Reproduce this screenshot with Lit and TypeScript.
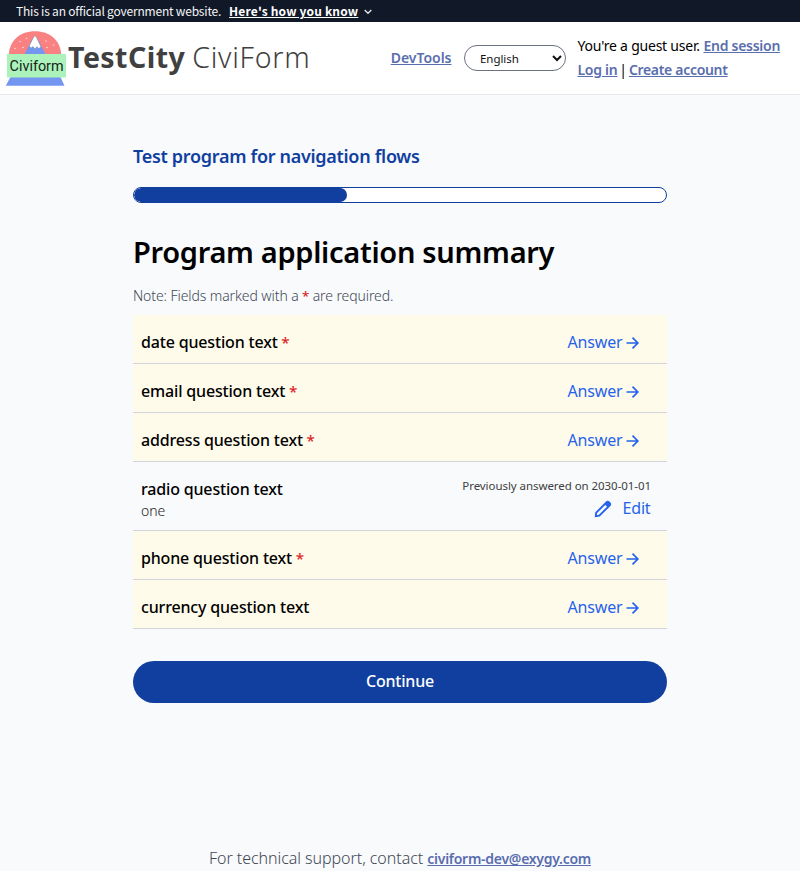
import { LitElement, html, css, svg, nothing } from "lit";
import { customElement } from "lit/decorators.js";

interface Question {
  text: string;
  required?: boolean;
  answer?: string;
  answeredOn?: string;
}

const QUESTIONS: Question[] = [
  { text: "date question text", required: true },
  { text: "email question text", required: true },
  { text: "address question text", required: true },
  { text: "radio question text", answer: "one", answeredOn: "2030-01-01" },
  { text: "phone question text", required: true },
  { text: "currency question text" },
];

const dots = [
  [15, 18.5], [20, 11.5], [26.500, 8.5], [23, 17.5], [46, 11], [47, 17.5], [53.500, 15],
];

const logo = html`<svg class="logo" width="64" height="60" viewBox="0 0 64 60">
  <path d="M8.8 24C10 10 20 1.200 35 1.200C50 1.200 60 10 61.200 24Z" fill="#fa8182" />
  ${dots.map(([x, y]) => svg`<circle cx=${x} cy=${y} r="0.8" fill="#fbd5d6" />`)}
  <path d="M24.700 24L32 9.500Q35 3 38 9.500L45.500 24Z" fill="#7396f0" />
  <path d="M29.200 16L33.700 7Q35 4.800 36.300 7L41 17L38.500 18.500L37 16.500L35 19L33 16.500L31 18Z" fill="#fff" stroke="#777" stroke-width="0.4" />
  <path d="M11 46H60L64.500 55.800H5.800Z" fill="#7396f0" />
  <rect x="7" y="24" width="59" height="23.500" fill="#abf3bb" />
  <text class="logo-text" x="9.600" y="41" textLength="54" lengthAdjust="spacingAndGlyphs">Civiform</text>
</svg>`;

const arrow = html`<svg class="arrow" width="13" height="14" viewBox="0 0 13 14">
  <path d="M0.500 7H11.500M6.500 1.700L11.800 7L6.500 12.300" fill="none" stroke="currentColor" stroke-width="1.700" />
</svg>`;

const pencil = html`<svg class="pencil" width="18" height="18" viewBox="0 0 18 18">
  <path d="M1.800 16.200L2.200 12.700L12.700 2.200Q13.700 1.300 14.700 2.200L15.700 3.200Q16.700 4.200 15.700 5.300L5.300 15.700Z" fill="none" stroke="currentColor" stroke-width="1.900" />
  <path d="M10.600 4.200L13 1.700Q14 1 15 1.800L16.300 3.100Q17 4 16.300 5L13.800 7.400Z" fill="currentColor" />
</svg>`;

@customElement("app-root")
export class AppRoot extends LitElement {
  static styles = css`
    :host {
      display: flex;
      flex-direction: column;
      height: 871px;
      overflow: hidden;
      background: #f8fafc;
      color: #000;
      font-family: "Noto Sans", sans-serif;
      font-size: 16px;
      white-space: nowrap;
    }
    * { box-sizing: border-box; }
    .banner {
      display: flex;
      align-items: center;
      height: 22px;
      flex: none;
      padding-left: 16px;
      background: #111827;
      color: #f3f4f6;
      font: 12px/22px "Noto Sans CJK JP", sans-serif;
    }
    .official { letter-spacing: -0.2px; }
    .know { margin-left: 8px; color: #fff; font-weight: 700; letter-spacing: 0.17px; text-decoration: underline; }
    .chev { margin: 2px 0 0 6px; }
    header {
      display: flex;
      align-items: center;
      height: 73px;
      flex: none;
      padding: 0 20px 0 0;
      background: #fff;
      border-bottom: 1px solid #e5e7eb;
    }
    .logo { display: block; flex: none; margin: 3px 4px 0 0; overflow: visible; }
    .logo-text { font: 15px Roboto, sans-serif; fill: #14251a; }
    .brand { margin-top: -2px; font-size: 28.500px; line-height: 36px; color: #404040; font-weight: 300; }
    .brand b { font-weight: 700; letter-spacing: 0.450px; }
    .civi { margin-left: -0.500px; letter-spacing: 0.75px; }
    a { color: #5a6dae; font-weight: 600; font-size: 14px; letter-spacing: -0.27px; text-decoration: underline; }
    .tools { display: flex; align-items: center; margin-left: auto; }
    .dev { margin-top: -2px; letter-spacing: -0.02px; }
    select {
      width: 102px;
      height: 26px;
      margin: 0 11.5px 0 12.5px;
      padding: 0 0 0 11px;
      border: 1px solid #6b7280;
      border-radius: 13px;
      background: #fff;
      color: #111;
      font: 11.500px "Noto Sans", sans-serif;
      letter-spacing: -0.05px;
    }
    .user { width: 202.5px; font-size: 14px; line-height: 24px; }
    .guest { letter-spacing: -0.22px; }
    .bar { margin: 0 -1.8px; }
    .create { letter-spacing: -0.31px; }
    main { width: 534px; margin: 47px auto 0; flex: none; }
    .program { margin: 0; color: #113f9f; font-size: 18px; line-height: 28px; font-weight: 600; letter-spacing: -0.3px; }
    .track { height: 16px; margin-top: 17px; border: 1px solid #113f9f; border-radius: 8px; background: #fff; overflow: hidden; }
    .fill { height: 14px; border-radius: 8px; background: #113f9f; }
    h1 { margin: 29px 0 0; font-size: 29px; line-height: 40px; font-weight: 600; letter-spacing: -0.3px; }
    .note { height: 20px; margin-top: 14px; font-size: 14px; line-height: 20px; color: #3f4855; font-weight: 350; letter-spacing: -0.09px; }
    .star { margin-left: -0.3px; color: #dc2626; font-size: 0.95em; line-height: 0; font-weight: 500; }
    .list { margin-top: 9px; }
    .row { display: flex; justify-content: space-between; height: 49px; padding: 16px 16px 0 8px; border-bottom: 1px solid #d1d5db; background: #fffbeb; line-height: 22px; }
    .row.done { height: 69px; background: none; }
    .q { font-weight: 500; letter-spacing: -0.17px; }
    .ans { margin-top: 1px; font-size: 14px; color: #222; line-height: 20px; font-weight: 350; }
    .action { display: flex; align-items: center; height: 22px; margin-right: 12px; color: #2563eb; letter-spacing: -0.15px; }
    .arrow { margin: 2px 0 0 3.5px; }
    .side { display: flex; flex-direction: column; align-items: flex-end; margin-top: -2px; }
    .side .action { margin: 1px 0.5px 0 0; }
    .prev { font-size: 11.500px; line-height: 20px; color: #404040; letter-spacing: -0.06px; }
    .pencil { margin: 1px 10px 0 0; }
    button { display: block; width: 534px; height: 42px; margin: 32px 0 0; padding: 0 0 2px; border: 0; border-radius: 21px; background: #113f9f; color: #fff; font: 500 16px "Noto Sans", sans-serif; letter-spacing: -0.2px; }
    footer { margin-top: 143px; text-align: center; line-height: 24px; color: #3f4855; font-weight: 350; }
    .support { letter-spacing: -0.05px; }
  `;

  private renderQuestion(q: Question) {
    const done = q.answer !== undefined;
    return html`<div class="row ${done ? "done" : ""}">
      <div>
        <div class="q">${q.text}${q.required ? html` <span class="star">*</span>` : nothing}</div>
        ${done ? html`<div class="ans">${q.answer}</div>` : nothing}
      </div>
      ${done
        ? html`<div class="side"><div class="prev">Previously answered on ${q.answeredOn}</div><div class="action">${pencil}<span>Edit</span></div></div>`
        : html`<div class="action"><span>Answer</span>${arrow}</div>`}
    </div>`;
  }

  render() {
    return html`
      <div class="banner">
        <span class="official">This is an official government website.</span>
        <span class="know">Here's how you know</span>
        <svg class="chev" width="8" height="6" viewBox="0 0 8 6"><path d="M0.700 1L4 4.300L7.300 1" fill="none" stroke="#e5e7eb" stroke-width="1.300" /></svg>
      </div>
      <header>
        ${logo}
        <div class="brand"><b>TestCity</b> <span class="civi">CiviForm</span></div>
        <div class="tools">
          <a class="dev">DevTools</a>
          <select><option>English</option></select>
          <div class="user">
            <div><span class="guest">You're a guest user.</span> <a>End session</a></div>
            <div><a>Log in</a> <span class="bar">|</span> <a class="create">Create account</a></div>
          </div>
        </div>
      </header>
      <main>
        <h2 class="program">Test program for navigation flows</h2>
        <div class="track"><div class="fill" style="width: 40%"></div></div>
        <h1>Program application summary</h1>
        <div class="note">Note: Fields marked with a <span class="star">*</span> are required.</div>
        <div class="list">${QUESTIONS.map((q) => this.renderQuestion(q))}</div>
        <button>Continue</button>
      </main>
      <footer><span class="support">For technical support, contact</span> <a>civiform-dev@exygy.com</a></footer>
    `;
  }
}
